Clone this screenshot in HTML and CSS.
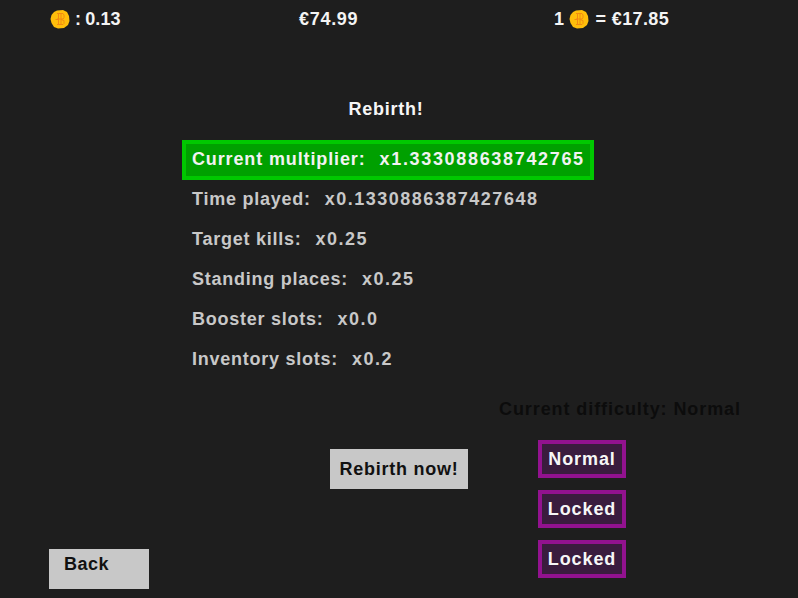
FILE: index.html
```html
<!DOCTYPE html>
<html lang="en">
<head>
    <meta charset="UTF-8">
    <title>Rebirth</title>
    <link rel="stylesheet" href="styles.css">
</head>
<body>
    <svg class="svg-defs" width="0" height="0" aria-hidden="true">
        <symbol id="coin" viewBox="0 0 20 20">
            <path d="M7 1.500 L13 1 L17 3 L19 7 L19.500 12 L18 16 L14 19 L8 19.500 L4 18 L1.500 14 L0.500 10 L1.500 6 L4 3 Z" fill="#ffbe0b"/>
            <path d="M5.500 10.500 L9 10.500 M8.500 4 L8.500 16 M11 4 L11 16 M7 4.500 L13 4.500 L14 6 L14 8.500 L13 10 L7 10 M11 10.500 L14 11.500 L14 14.500 L13 15.500 L7 15.500" fill="none" stroke="#f28a12" stroke-width="1"/>
        </symbol>
    </svg>
    <div class="top-bar">
        <div class="stat stat-coins"><svg class="coin"><use href="#coin"/></svg><span>: 0.13</span></div>
        <div class="stat stat-money">€74.99</div>
        <div class="stat stat-rate"><span>1</span><svg class="coin"><use href="#coin"/></svg><span>= €17.85</span></div>
    </div>
    <h2 class="title">Rebirth!</h2>
    <div class="multipliers">
        <div class="row row-current"><span class="label">Current multiplier:</span><span class="value">x1.333088638742765</span></div>
        <div class="row"><span class="label">Time played:</span><span class="value">x0.1330886387427648</span></div>
        <div class="row"><span class="label">Target kills:</span><span class="value">x0.25</span></div>
        <div class="row"><span class="label">Standing places:</span><span class="value">x0.25</span></div>
        <div class="row"><span class="label">Booster slots:</span><span class="value">x0.0</span></div>
        <div class="row"><span class="label">Inventory slots:</span><span class="value">x0.2</span></div>
    </div>
    <div class="lower">
        <button class="btn btn-back">Back</button>
        <button class="btn btn-rebirth">Rebirth now!</button>
        <div class="difficulty">
            <div class="difficulty-label">Current difficulty: Normal</div>
            <div class="difficulty-list">
                <button class="diff-btn">Normal</button>
                <button class="diff-btn">Locked</button>
                <button class="diff-btn">Locked</button>
            </div>
        </div>
    </div>
</body>
</html>
```

FILE: styles.css
```css
html, body {
    height: 100%;
}
body {
    margin: 0;
    background: #1e1e1e;
    color: #fff;
    font-family: "Liberation Sans", Arial, sans-serif;
    font-size: 18px;
    font-weight: 700;
    letter-spacing: 0.75px;
    overflow: hidden;
}
.svg-defs {
    display: block;
}
.top-bar {
    display: grid;
    grid-template-columns: 249px 255px 1fr;
    height: 40px;
    padding-left: 50px;
    color: #f4f4f4;
}
.stat {
    display: flex;
    align-items: center;
    gap: 5px;
    padding-bottom: 2px;
    letter-spacing: 0.1px;
    word-spacing: -1px;
}
.stat-money {
    letter-spacing: 0.7px;
}
.stat-rate {
    gap: 8px;
    letter-spacing: 0.4px;
    word-spacing: 0;
}
.stat-rate .coin {
    margin-left: -3px;
    margin-right: -2px;
}
.coin {
    width: 20px;
    height: 20px;
}
.title {
    margin: 50px 0 0 0;
    height: 40px;
    line-height: 38px;
    padding-right: 26px;
    text-align: center;
    font-size: 18px;
    color: #f6f6f6;
}
.multipliers {
    display: flex;
    flex-direction: column;
    margin: 10px 0 0 182px;
    width: 412px;
}
.row {
    display: flex;
    align-items: center;
    gap: 14px;
    height: 40px;
    padding: 0 10px 2px 10px;
    box-sizing: border-box;
    color: #c8c8c8;
    white-space: nowrap;
}
.row .value {
    letter-spacing: 1.5px;
}
.row-current {
    background: #00a000;
    border: 4px solid #00c800;
    padding: 0 6px 2px 6px;
    color: #f2f2f2;
}
.row-current .label {
    letter-spacing: 0.87px;
}
.row-current .value {
    letter-spacing: 1.67px;
}
.lower {
    display: flex;
    align-items: flex-start;
    height: 218px;
    padding-left: 49px;
}
.btn {
    background: #c8c8c8;
    color: #111;
    border: none;
    font: inherit;
    letter-spacing: inherit;
    padding: 0;
    height: 40px;
}
.btn-back {
    width: 100px;
    margin-top: 169px;
    padding: 0 25px 10px 0;
    letter-spacing: 0.5px;
}
.btn-rebirth {
    width: 138px;
    margin: 69px 0 0 181px;
}
.difficulty {
    margin-left: 31px;
    width: 241px;
    margin-top: 18px;
}
.difficulty-label {
    height: 22px;
    line-height: 22px;
    color: #0c0c0c;
    letter-spacing: 0.92px;
    white-space: nowrap;
}
.difficulty-list {
    display: flex;
    flex-direction: column;
    gap: 12px;
    margin: 20px 0 0 39px;
}
.diff-btn {
    width: 88px;
    height: 38px;
    box-sizing: border-box;
    background: #3a1c3e;
    border: 4px solid #92128f;
    color: #f6f6f6;
    font: inherit;
    letter-spacing: 0.9px;
    padding: 0;
}
```
